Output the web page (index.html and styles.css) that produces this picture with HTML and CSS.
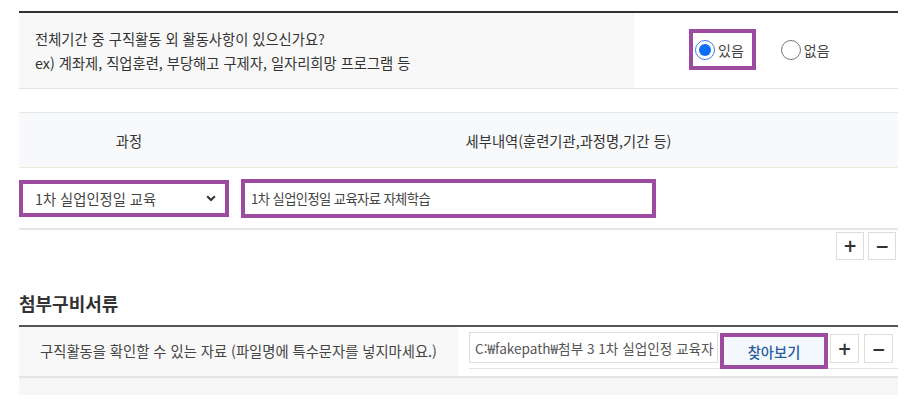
FILE: index.html
```html
<!DOCTYPE html>
<html lang="ko">
<head>
<meta charset="utf-8">
<link rel="stylesheet" href="styles.css">
</head>
<body>
<div class="page">
  <div class="qtable">
    <div class="qlabel">
      <p>전체기간 중 구직활동 외 활동사항이 있으신가요?</p>
      <p>ex) 계좌제, 직업훈련, 부당해고 구제자, 일자리희망 프로그램 등</p>
    </div>
    <div class="qvalue">
      <label class="radio hl"><span class="dot on"></span><span>있음</span></label>
      <label class="radio"><span class="dot"></span><span>없음</span></label>
    </div>
  </div>

  <div class="dtable">
    <div class="dhead">
      <div class="c1">과정</div>
      <div class="c2">세부내역(훈련기관,과정명,기간 등)</div>
    </div>
    <div class="drow">
      <div class="c1">
        <div class="select hl">
          <span>1차 실업인정일 교육</span>
          <svg class="chev" width="10" height="7" viewBox="0 0 10 7"><path d="M1.2 1.2 L5 5 L8.8 1.2" fill="none" stroke="#333" stroke-width="2"/></svg>
        </div>
      </div>
      <div class="c2">
        <div class="textin hl">1차 실업인정일 교육자료 자체학습</div>
      </div>
    </div>
  </div>
  <div class="pmrow">
    <span class="pm">+</span><span class="pm">−</span>
  </div>

  <h2 class="title">첨부구비서류</h2>
  <div class="atable">
    <div class="alabel">구직활동을 확인할 수 있는 자료 (파일명에 특수문자를 넣지마세요.)</div>
    <div class="avalue">
      <div class="frow">
        <div class="file"><span class="ftext">C:₩fakepath₩첨부 3 1차 실업인정 교육자</span></div>
        <span class="find hl">찾아보기</span>
        <span class="pm sm">+</span><span class="pm sm">−</span>
      </div>
    </div>
  </div>
  <div class="band"></div>
</div>
</body>
</html>
```
FILE: styles.css
```css
* { box-sizing: border-box; }
html, body { margin: 0; padding: 0; background: #fff; }
body {
  font-family: "Noto Sans CJK KR", "Noto Sans", sans-serif;
  font-size: 14.3px;
  color: #333;
}
.page { padding: 11px 9px 0 19px; }
p { margin: 0; }

.hl { border: 4px solid #9c4b9e; }

.qtable {
  display: flex;
  border-top: 2px solid #333;
  border-bottom: 1px solid #e2e2e2;
  height: 78px;
}
.qlabel {
  width: 615px;
  background: #f8f8f8;
  padding: 14px 0 0 16px;
  line-height: 24px;
  color: #333;
}
.qvalue {
  flex: 1;
  display: flex;
  align-items: center;
  padding-left: 55px;
  gap: 19px;
  padding-bottom: 2px;
}
.radio {
  display: flex;
  align-items: center;
  gap: 3px;
  color: #444;
  font-size: 14px;
  height: 41px;
  padding: 0 8px 0 2px;
}
.radio:not(.hl) { padding-left: 6px; }
.dot {
  width: 20px; height: 20px;
  border-radius: 50%;
  border: 1px solid #777;
  background: #fff;
  display: inline-block;
  position: relative;
}
.dot.on { border-color: #3b7cf0; }
.dot.on::after {
  content: "";
  position: absolute;
  left: 3px; top: 3px;
  width: 12px; height: 12px;
  border-radius: 50%;
  background: #0b6ef5;
}

.dtable {
  margin-top: 23px;
  border-top: 1px solid #e6e6e6;
  border-bottom: 2px solid #e6e6e6;
}
.dhead {
  display: flex;
  height: 55px;
  background: #f8f9fa;
  border-bottom: 1px solid #ece8dc;
  align-items: center;
  color: #333;
}
.c1 { width: 220px; text-align: center; }
.c2 { flex: 1; text-align: center; }
.drow {
  display: flex;
  height: 60px;
  align-items: center;
}
.drow .c1, .drow .c2 { text-align: left; }
.select {
  width: 210px;
  height: 37px;
  display: flex;
  align-items: center;
  justify-content: space-between;
  padding: 0 9px 0 12px;
  color: #444;
  background: #fff;
}
.textin {
  margin-left: 2px;
  width: 415px;
  height: 39px;
  display: flex;
  align-items: center;
  padding-left: 6px;
  color: #444;
  font-size: 13.3px;
  letter-spacing: -0.6px;
}

.pmrow {
  display: flex;
  justify-content: flex-end;
  gap: 4px;
  padding: 2px 2px 0 0;
}
.pm {
  width: 28px; height: 28px;
  border: 1px solid #ddd;
  display: flex;
  align-items: center;
  justify-content: center;
  font-family: "DejaVu Sans", sans-serif;
  font-size: 17px;
  font-weight: bold;
  color: #333;
  background: #fff;
}

.title {
  margin: 29px 0 0;
  font-size: 18px;
  font-weight: bold;
  line-height: 28px;
  color: #333;
}
.atable {
  margin-top: 8px;
  display: flex;
  border-top: 2px solid #555;
  border-bottom: 2px solid #e4e4e4;
  height: 53px;
}
.alabel {
  width: 439px;
  background: #f8f8f8;
  text-align: center;
  padding-top: 13px;
  color: #444;
}
.avalue { flex: 1; padding-left: 11px; }
.frow {
  display: flex;
  align-items: flex-start;
  border-bottom: 1px solid #e2e2e2;
  height: 42px;
  padding-top: 5px;
}
.file {
  width: 249px;
  height: 31px;
  border: 1px solid #ddd;
  padding: 0 0 0 5px;
  display: flex;
  align-items: center;
  white-space: nowrap;
  overflow: hidden;
  color: #555;
  font-size: 13.6px;
}
.find {
  width: 108px;
  height: 36px;
  margin-left: 2px;
  display: flex;
  align-items: center;
  justify-content: center;
  background: #f3f8fd;
  color: #2a5d9e;
  font-weight: 500;
  margin-top: 1px;
}
.pm.sm { width: 29px; height: 29px; margin-left: 2px; margin-top: 2px; }
.pm.sm + .pm.sm { margin-left: 5px; }
.band {
  height: 17px;
  background: #f6f6f6;
}
```
